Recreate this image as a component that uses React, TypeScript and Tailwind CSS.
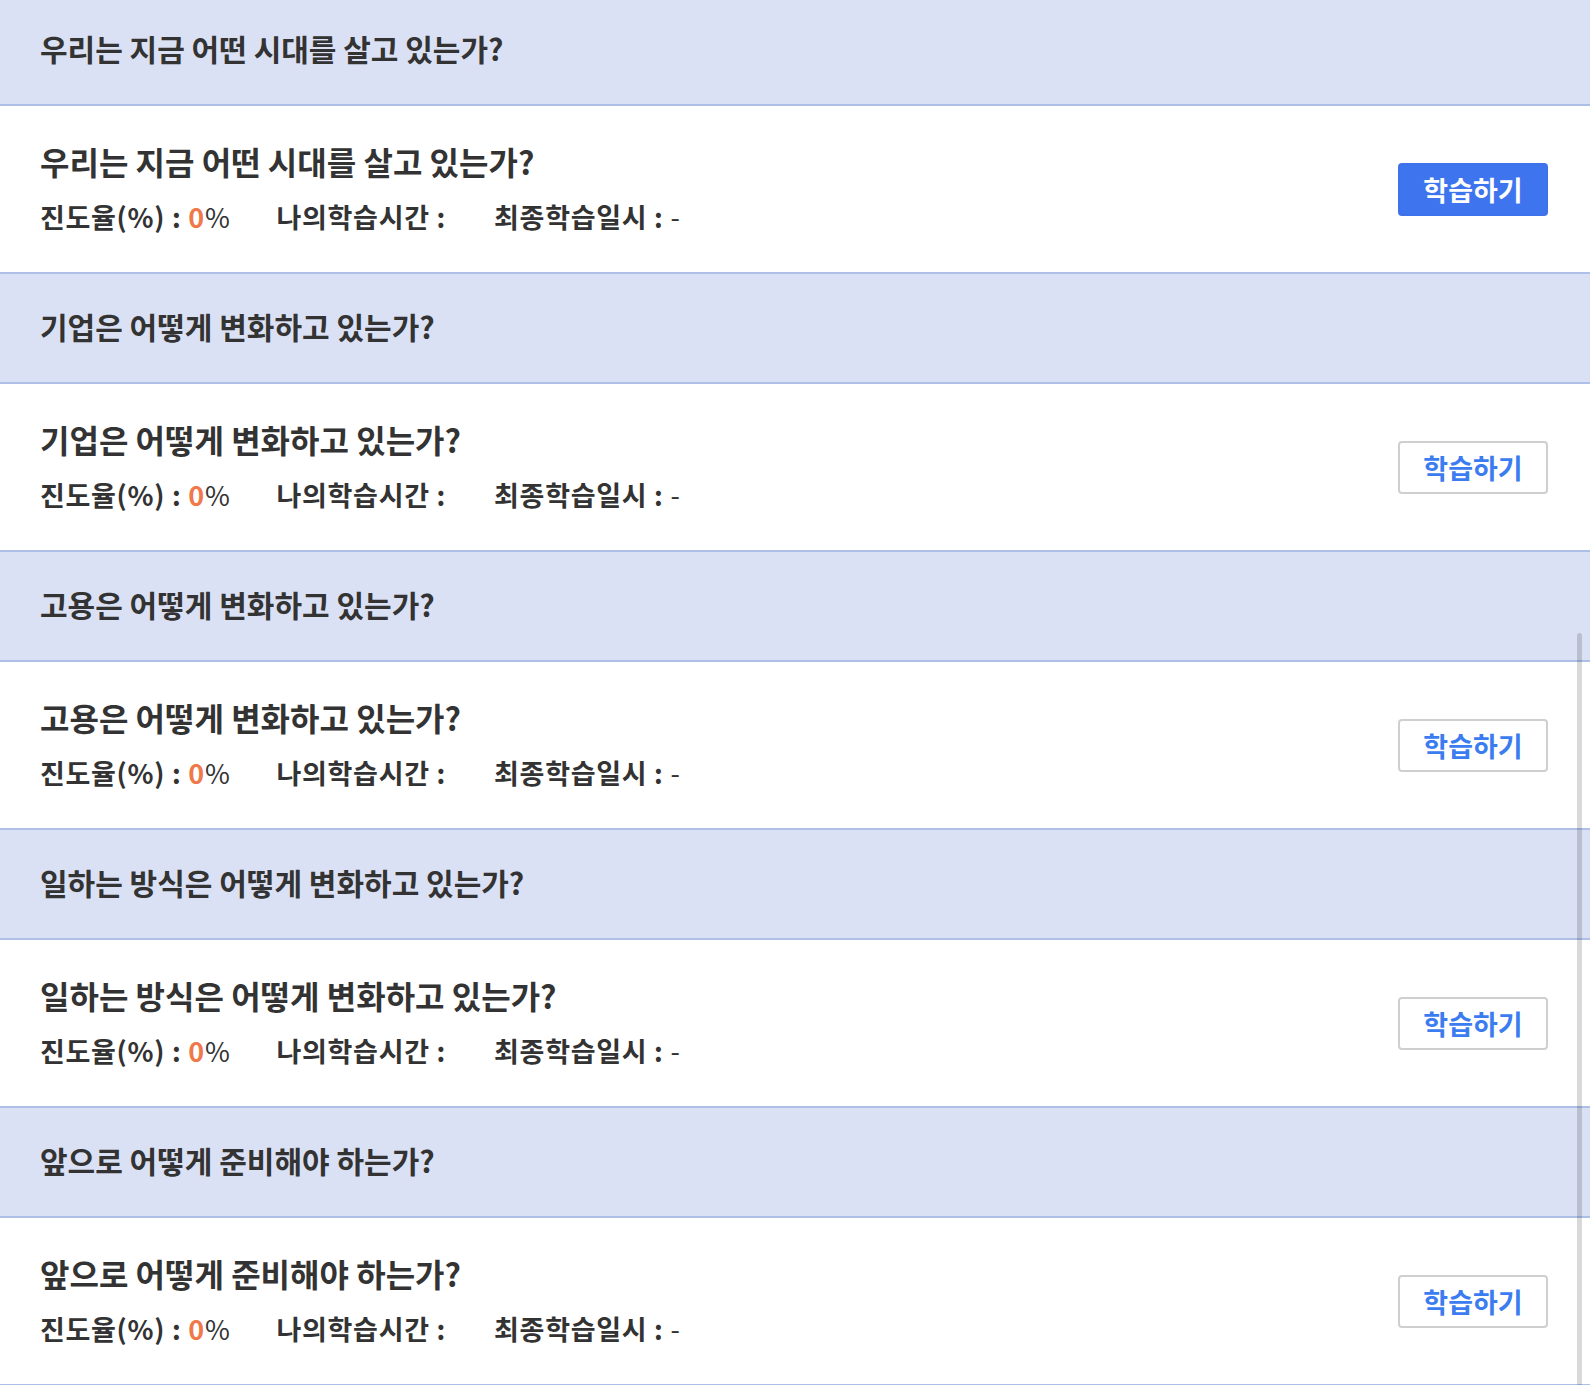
const chapters = [
  "우리는 지금 어떤 시대를 살고 있는가?",
  "기업은 어떻게 변화하고 있는가?",
  "고용은 어떻게 변화하고 있는가?",
  "일하는 방식은 어떻게 변화하고 있는가?",
  "앞으로 어떻게 준비해야 하는가?",
]

function LessonRow({ title, active }: { title: string; active: boolean }) {
  return (
    <div className="flex h-[168px] items-center justify-between border-b-2 border-[#aec0e8] bg-white pl-[40px] pr-[42px]">
      <div className="flex flex-col pb-[5px]">
        <h3 className="text-[32px] font-bold leading-[44px] text-[#333]">{title}</h3>
        <div className="mt-[16px] flex items-center text-[27px] font-bold leading-[36px] tracking-[0.7px] text-[#333]">
          <span>
            진도율(%) : <span className="text-[#f0784a]">0</span>
            <span className="font-normal">%</span>
          </span>
          <span className="ml-[46px]">나의학습시간 :</span>
          <span className="ml-[48px]">
            최종학습일시 : <span className="font-normal">-</span>
          </span>
        </div>
      </div>
      <button
        className={
          active
            ? "h-[53px] w-[150px] rounded-[4px] border-2 border-[#3e72ea] bg-[#3f74ef] pt-[2px] text-[27px] font-bold text-white"
            : "h-[53px] w-[150px] rounded-[4px] border-2 border-[#cfcfcf] bg-white pt-[2px] text-[27px] font-bold text-[#3b7cf0]"
        }
      >
        학습하기
      </button>
    </div>
  )
}

export default function App() {
  return (
    <div
      className="relative h-[1385px] w-[1590px] overflow-hidden bg-white"
      style={{ fontFamily: '"Noto Sans CJK KR", "Noto Sans", sans-serif' }}
    >
      <div className="-mt-[4px] flex flex-col">
        {chapters.map((title, index) => (
          <div key={index} className="flex flex-col">
            <div className="flex h-[110px] items-center border-b-2 border-[#aec0e8] bg-[#dbe1f4] px-[40px] pb-[3px]">
              <h2 className="text-[30px] font-bold text-[#333]">{title}</h2>
            </div>
            <LessonRow title={title} active={index === 0} />
          </div>
        ))}
      </div>
      <div className="absolute right-[8px] top-[633px] bottom-0 w-[5px] rounded-t-full bg-black/15" />
    </div>
  )
}
